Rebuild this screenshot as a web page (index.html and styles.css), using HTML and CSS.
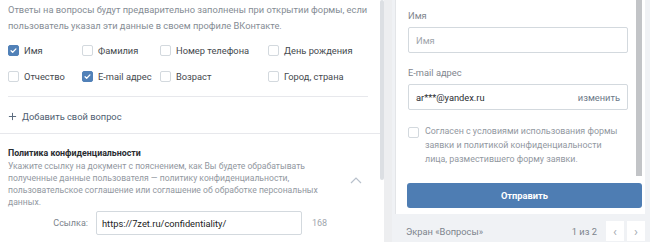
FILE: index.html
```html
<!DOCTYPE html>
<html lang="ru">
<head>
<meta charset="utf-8">
<link rel="stylesheet" href="styles.css">
</head>
<body>
<div class="page">
  <div class="left">
    <p class="hint">Ответы на вопросы будут предварительно заполнены при открытии формы, если пользователь указал эти данные в своем профиле ВКонтакте.</p>
    <div class="checks">
      <label class="check"><span class="box on"><svg viewBox="0 0 10 10"><path d="M2.3 5.2l1.8 1.8 3.6-3.8" fill="none" stroke="#fff" stroke-width="1.4" stroke-linecap="round" stroke-linejoin="round"/></svg></span>Имя</label>
      <label class="check"><span class="box"></span>Фамилия</label>
      <label class="check"><span class="box"></span>Номер телефона</label>
      <label class="check"><span class="box"></span>День рождения</label>
      <label class="check"><span class="box"></span>Отчество</label>
      <label class="check"><span class="box on"><svg viewBox="0 0 10 10"><path d="M2.3 5.2l1.8 1.8 3.6-3.8" fill="none" stroke="#fff" stroke-width="1.4" stroke-linecap="round" stroke-linejoin="round"/></svg></span>E-mail адрес</label>
      <label class="check"><span class="box"></span>Возраст</label>
      <label class="check"><span class="box"></span>Город, страна</label>
    </div>
    <div class="sep"></div>
    <div class="add"><svg class="plus" viewBox="0 0 10 10"><path d="M5 1v8M1 5h8" stroke="#5b6b7e" stroke-width="1.1"/></svg>Добавить свой вопрос</div>
    <div class="section">
      <div class="sec-head">
        <div class="sec-text">
          <div class="sec-title">Политика конфиденциальности</div>
          <p class="sec-desc">Укажите ссылку на документ с пояснением, как Вы будете обрабатывать полученные данные пользователя — политику конфиденциальности, пользовательское соглашение или соглашение об обработке персональных данных.</p>
        </div>
        <svg class="chev" viewBox="0 0 12 7"><path d="M1 6l5-5 5 5" fill="none" stroke="#b8c1cc" stroke-width="1.2"/></svg>
      </div>
      <div class="link-row">
        <span class="link-label">Ссылка:</span>
        <div class="link-input">https://7zet.ru/confidentiality/</div>
        <span class="count">168</span>
      </div>
    </div>
  </div>
  <div class="lscroll"><div class="lthumb"></div></div>
  <div class="right">
    <div class="card">
      <div class="scroll">
        <div class="form">
          <div class="f-label">Имя</div>
          <div class="f-input placeholder">Имя</div>
          <div class="f-label">E-mail адрес</div>
          <div class="f-input"><span>ar***@yandex.ru</span><span class="change">изменить</span></div>
          <div class="agree"><span class="box"></span><p>Согласен с условиями использования формы<br>заявки и политикой конфиденциальности<br>лица, разместившего форму заявки.</p></div>
        </div>
        <div class="rthumb"></div>
      </div>
      <div class="submit">Отправить</div>
    </div>
    <div class="footer">
      <span class="screen">Экран «Вопросы»</span>
      <span class="pages">1 из 2</span>
      <span class="nav">‹</span>
      <span class="nav">›</span>
    </div>
  </div>
</div>
</body>
</html>
```
FILE: styles.css
```css
* { box-sizing: border-box; }
html, body { margin: 0; padding: 0; }
body {
  width: 650px;
  height: 242px;
  overflow: hidden;
  background: #edeef0;
  font-family: Roboto, "Liberation Sans", Arial, sans-serif;
  color: #222;
}
.page {
  display: flex;
  height: 242px;
}
.left {
  width: 380px;
  flex: none;
  background: #fff;
  overflow: hidden;
}
.hint {
  margin: 0;
  padding: 2px 8px 0;
  font-size: 9.3px;
  line-height: 16px;
  color: #858c94;
}
.checks {
  display: grid;
  grid-template-columns: 74px 78px 108px 1fr;
  grid-auto-rows: 26px;
  margin: 3px 0 0 8px;
}
.check {
  display: flex;
  align-items: center;
  gap: 5px;
  font-size: 9.3px;
  color: #45494e;
}
.box {
  width: 11px;
  height: 11px;
  flex: none;
  border: 1px solid #d3d9de;
  border-radius: 2px;
  background: #fff;
  display: flex;
}
.box.on {
  background: #5181b8;
  border-color: #5181b8;
}
.box svg { width: 100%; height: 100%; }
.sep {
  height: 1px;
  background: #e7e8ec;
  margin: 7px 12px 0 8px;
}
.add {
  display: flex;
  align-items: center;
  gap: 5px;
  height: 20px;
  margin-top: 9px;
  padding-left: 8px;
  font-size: 9.3px;
  color: #4e5d70;
}
.plus { width: 9px; height: 9px; }
.section {
  margin-top: 7px;
  border-top: 1px solid #e7e8ec;
  padding: 13px 0 0 8px;
}
.sec-head {
  display: flex;
  align-items: center;
}
.sec-text { width: 310px; }
.sec-title {
  font-size: 8.8px;
  font-weight: 700;
  color: #2a2d31;
  line-height: 12px;
}
.sec-desc {
  margin: 1px 0 0;
  font-size: 8.6px;
  line-height: 12px;
  color: #92989f;
}
.chev {
  width: 12px;
  height: 7px;
  margin: 6px 0 0 32px;
}
.link-row {
  display: flex;
  align-items: center;
  margin-top: 3px;
}
.link-label {
  width: 80px;
  text-align: right;
  font-size: 9px;
  color: #7c848c;
}
.link-input {
  width: 206px;
  height: 24px;
  margin-left: 8px;
  border: 1px solid #d3d9de;
  border-radius: 2px;
  padding: 0 5px;
  display: flex;
  align-items: center;
  font-size: 9.3px;
  color: #222;
}
.count {
  margin-left: 10px;
  font-size: 9px;
  color: #a0a6ad;
}
.lscroll {
  width: 4px;
  flex: none;
  background: #fff;
}
.lthumb {
  height: 180px;
  background: #dcdfe3;
  border-radius: 2px;
}
.right {
  width: 258px;
  flex: none;
  margin-left: 8px;
  background: #f0f2f5;
  display: flex;
  flex-direction: column;
  padding-left: 3px;
}
.card {
  width: 250px;
  background: #fff;
  border-left: 1px solid #e3e5e8;
  padding-bottom: 6px;
}
.scroll {
  display: flex;
  height: 176px;
}
.form {
  flex: 1;
  padding: 9px 8px 0 12px;
}
.f-label {
  font-size: 9.3px;
  color: #7f868e;
  line-height: 14px;
}
.f-input {
  margin: 4px 0 13px;
  height: 26px;
  border: 1px solid #d3d9de;
  border-radius: 2px;
  padding: 0 7px;
  display: flex;
  align-items: center;
  justify-content: space-between;
  font-size: 9.3px;
  color: #2a2d31;
}
.f-input.placeholder { color: #9ea4ab; }
.change { color: #6b7887; }
.agree {
  display: flex;
  gap: 6px;
  margin-top: 17px;
}
.agree p {
  margin: -3px 0 0;
  font-size: 8.9px;
  line-height: 14px;
  color: #92989f;
  white-space: nowrap;
}
.rthumb {
  width: 6px;
  background: #c2c4c7;
  margin-right: 3px;
}
.submit {
  margin: 7px 3px 0 11px;
  height: 25px;
  background: #4e7db3;
  border-radius: 3px;
  color: #fff;
  font-size: 9.3px;
  font-weight: 700;
  display: flex;
  align-items: center;
  justify-content: center;
}
.footer {
  display: flex;
  align-items: center;
  height: 28px;
  padding: 6px 2px 0 11px;
  font-size: 9.3px;
  color: #7c848c;
}
.screen { flex: 1; }
.pages { margin-right: 9px; }
.nav {
  width: 18px;
  height: 20px;
  margin-right: 3px;
  background: #fff;
  display: flex;
  align-items: center;
  justify-content: center;
  color: #a5abb2;
  font-size: 13px;
}
```
